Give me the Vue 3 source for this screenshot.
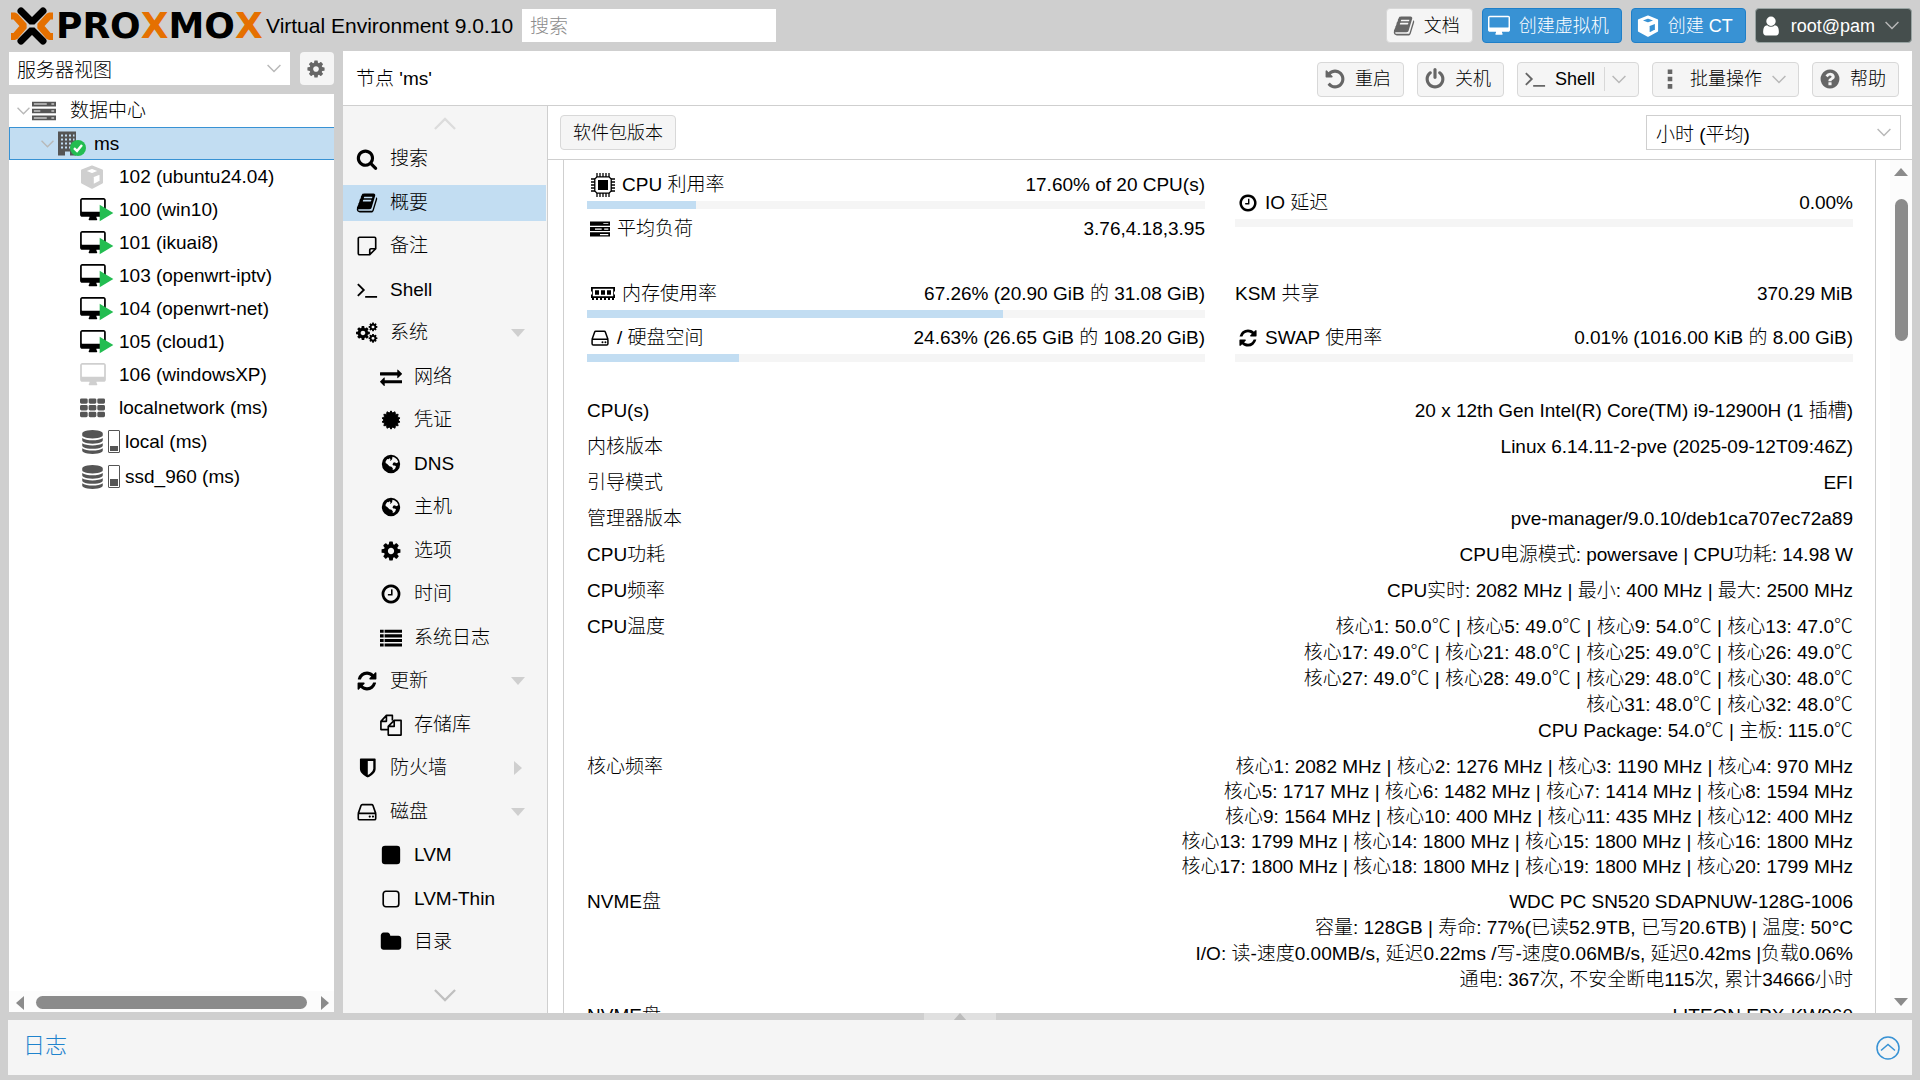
<script setup>
import { ref, h } from 'vue';

// --- ICONS ---
const cog = 'M1152 896q0-106-75-181t-181-75-181 75-75 181 75 181 181 75 181-75 75-181zm512-109v222q0 12-8 23t-20 13l-185 28q-19 54-39 91 35 50 107 138 10 12 10 25t-9 23q-27 37-99 108t-94 71q-12 0-26-9l-138-108q-44 23-91 38-16 136-29 186-7 28-36 28h-222q-14 0-24.5-8.5t-11.5-21.5l-28-184q-49-16-90-37l-141 107q-10 9-25 9-14 0-25-11-126-114-165-168-7-10-7-23 0-12 8-23 15-21 51-66.5t54-70.5q-27-50-41-99l-183-27q-13-2-21-12.5t-8-23.5v-222q0-12 8-23t19-13l186-28q14-46 39-92-40-57-107-138-10-12-10-24 0-10 9-23 26-36 98.5-107.5t94.5-71.5q13 0 26 10l138 107q44-23 91-38 16-136 29-186 7-28 36-28h222q14 0 24.5 8.5t11.5 21.5l28 184q49 16 90 37l142-107q9-9 24-9 13 0 25 10 129 119 165 170 7 8 7 22 0 12-8 23-15 21-51 66.5t-54 70.5q26 50 41 98l183 28q13 2 21 12.5t8 23.5z';
const desktop = 'M1728 992v-832q0-13-9.5-22.5t-22.5-9.5h-1600q-13 0-22.5 9.5t-9.5 22.5v832q0 13 9.5 22.5t22.5 9.5h1600q13 0 22.5-9.5t9.5-22.5zm128-832v1088q0 66-47 113t-113 47h-544q0 37 16 77.5t32 71 16 43.5q0 26-19 45t-45 19h-512q-26 0-45-19t-19-45q0-14 16-44t32-70 16-78h-544q-66 0-113-47t-47-113v-1088q0-66 47-113t113-47h1600q66 0 113 47t47 113z';

const starPoints = (teeth, outer, inner) => Array.from({ length: teeth * 2 }, (_, i) => {
  const r = i % 2 ? inner : outer;
  const a = (Math.PI * i) / teeth;
  return `${(12 + r * Math.sin(a)).toFixed(2)},${(12 - r * Math.cos(a)).toFixed(2)}`;
}).join(' ');

const path = (d) => `<path fill="currentColor" d="${d}"/>`;
const FA = '0 0 1792 1792';

// name: [viewBox, markup]
const icons = {
  search: [FA, path('M1216 832q0-185-131.5-316.5t-316.5-131.5-316.5 131.5-131.5 316.5 131.5 316.5 316.5 131.5 316.5-131.5 131.5-316.5zm512 832q0 52-38 90t-90 38q-54 0-90-38l-343-342q-179 124-399 124-143 0-273.5-55.5t-225-150-150-225-55.5-273.5 55.5-273.5 150-225 225-150 273.5-55.5 273.5 55.5 225 150 150 225 55.5 273.5q0 220-124 399l343 343q37 37 37 90z')],
  cog: [FA, path(cog)],
  cogs: ['0 0 24 24', `<g transform="translate(-1.2 3.2) scale(.0098)">${path(cog)}</g><g transform="translate(13 -.2) scale(.0062)">${path(cog)}</g><g transform="translate(13 12.2) scale(.0062)">${path(cog)}</g>`],
  book: [FA, path('M1703 478q40 57 18 129l-275 906q-19 64-76.5 107.5t-122.5 43.5h-923q-77 0-148.5-53.5t-99.5-131.5q-24-67-2-127 0-4 3-27t4-37q1-8-3-21.5t-3-19.5q2-11 8-21t16.5-23.5 16.5-23.5q23-38 45-91.5t30-91.5q3-10 .5-30t-.5-28q3-11 17-28t17-23q21-36 42-92t25-90q1-9-2.5-32t.5-28q4-13 22-30.5t22-22.5q19-26 42.5-84.5t27.5-96.5q1-8-3-25.5t-2-26.5q2-8 9-18t18-23 17-21q8-12 16.5-30.5t15-35 16-36 19.5-32 26.5-23.5 36-11.5 47.5 5.5l-1 3q38-9 51-9h761q74 0 114 56t18 130l-274 906q-36 119-71.5 153.5t-128.5 34.5h-869q-27 0-38 15-11 16-1 43 24 70 144 70h923q29 0 56-15.5t35-41.5l300-987q7-22 5-57 38 15 59 43zm-1064 2q-4 13 2 22.5t20 9.5h608q13 0 25.5-9.5t16.5-22.5l21-64q4-13-2-22.5t-20-9.5h-608q-13 0-25.5 9.5t-16.5 22.5zm-83 256q-4 13 2 22.5t20 9.5h608q13 0 25.5-9.5t16.5-22.5l21-64q4-13-2-22.5t-20-9.5h-608q-13 0-25.5 9.5t-16.5 22.5z')],
  note: ['0 0 24 24', '<path fill="none" stroke="currentColor" stroke-width="1.8" stroke-linejoin="round" d="M15 21.5H3.8a1.3 1.3 0 0 1-1.3-1.3V3.8a1.3 1.3 0 0 1 1.3-1.3h16.4a1.3 1.3 0 0 1 1.3 1.3V15L15 21.5v-5.2a1.3 1.3 0 0 1 1.3-1.3h5.2"/>'],
  terminal: ['0 0 24 24', '<path fill="none" stroke="currentColor" stroke-width="2" d="M2 5.5 8.5 12 2 18.5M10 19.5h13"/>'],
  exchange: [FA, path('M1792 1184v192q0 13-9.5 22.5t-22.5 9.5h-1376v192q0 13-9.5 22.5t-22.5 9.5q-12 0-24-10l-319-320q-9-9-9-22 0-14 9-23l320-320q9-9 23-9 13 0 22.5 9.5t9.5 22.5v192h1376q13 0 22.5 9.5t9.5 22.5zm0-544q0 14-9 23l-320 320q-9 9-23 9-13 0-22.5-9.5t-9.5-22.5v-192h-1376q-13 0-22.5-9.5t-9.5-22.5v-192q0-13 9.5-22.5t22.5-9.5h1376v-192q0-14 9-23t23-9q12 0 24 10l319 319q9 9 9 23z')],
  certificate: ['0 0 24 24', `<polygon fill="currentColor" stroke="currentColor" stroke-linejoin="round" points="${starPoints(14, 10, 7.8)}"/>`],
  globe: ['0 0 24 24', '<path fill="currentColor" fill-rule="evenodd" d="M12 2a10 10 0 1 0 0 20a10 10 0 1 0 0-20zM13.6 4.200l2.400.6 2.400 2 1.500 2.800-.8 1-1.700.6-1-1-2 .4-.8 2.200 1.600 1.200 1-.3 1.200.8-.7 2-1.300 1.600-1.600.4.200-2-1.500-1.500-2.200-.6-2.400-2.400-1.800-1.200.1-1.700 1.700-2.500 1.300.3 1.200-1.100 1.300 1-1 1 1 .6 1.500-1.500z"/>'],
  clock: [FA, path('M1024 544v448q0 14-9 23t-23 9h-320q-14 0-23-9t-9-23v-64q0-14 9-23t23-9h224v-352q0-14 9-23t23-9h64q14 0 23 9t9 23zm416 352q0-148-73-273t-198-198-273-73-273 73-198 198-73 273 73 273 198 198 273 73 273-73 198-198 73-273zm224 0q0 209-103 385.5t-279.5 279.5-385.5 103-385.5-103-279.5-279.5-103-385.5 103-385.5 279.5-279.5 385.5-103 385.5 103 279.5 279.5 103 385.5z')],
  list: ['0 0 24 24', path('M0 3h4v3.4H0zM5 3h19v3.4H5zM0 8h4v3.4H0zM5 8h19v3.4H5zM0 13h4v3.4H0zM5 13h19v3.4H5zM0 18h4v3.4H0zM5 18h19v3.4H5z')],
  refresh: [FA, path('M1639 1056q0 5-1 7-64 268-268 434.5t-478 166.5q-146 0-282.5-55t-243.5-157l-129 129q-19 19-45 19t-45-19-19-45v-448q0-26 19-45t45-19h448q26 0 45 19t19 45-19 45l-137 137q71 66 161 102t187 36q134 0 250-65t186-179q11-17 53-117 8-23 30-23h192q13 0 22.5 9.5t9.5 22.5zm25-800v448q0 26-19 45t-45 19h-448q-26 0-45-19t-19-45 19-45l138-138q-148-137-349-137-134 0-250 65t-186 179q-11 17-53 117-8 23-30 23h-199q-13 0-22.5-9.5t-9.5-22.5v-7q65-268 270-434.5t480-166.5q146 0 284 55.5t245 156.5l130-129q19-19 45-19t45 19 19 45z')],
  files: ['0 0 24 24', '<path fill="none" stroke="currentColor" stroke-width="1.8" stroke-linejoin="round" d="M9 17H1V8l6-6.5h6.5V7M7 1.5V8H1M9 23v-9.5L15.500 7H23v16zM15.500 7v6.500H9"/>'],
  shield: [FA, path('M1408 960v-640h-448v1137q119-63 213-137 235-184 235-360zm192-768v768q0 86-33.5 170.500t-83 150-118 127.500-126.500 103-121 77.500-89.500 49.500-42.500 20q-12 6-26 6t-26-6q-16-7-42.500-20t-89.500-49.500-121-77.500-126.500-103-118-127.500-83-150-33.500-170.500v-768q0-26 19-45t45-19h1152q26 0 45 19t19 45z')],
  hdd: ['0 0 24 24', '<path fill="none" stroke="currentColor" stroke-width="1.8" stroke-linejoin="round" d="M2.500 13.500v5.500a1.500 1.500 0 0 0 1.500 1.500h16a1.500 1.500 0 0 0 1.500-1.500v-5.500zM2.500 13.500 5.500 5a1.500 1.500 0 0 1 1.400-1h10.200a1.500 1.500 0 0 1 1.400 1l3 8.500"/><circle cx="15" cy="17" r="1.200" fill="currentColor"/><circle cx="18.500" cy="17" r="1.200" fill="currentColor"/>'],
  square: ['0 0 24 24', '<rect x="2" y="2" width="20" height="20" rx="3.500" fill="currentColor"/>'],
  squareO: ['0 0 24 24', '<rect x="3.500" y="3.500" width="17" height="17" rx="3" fill="none" stroke="currentColor" stroke-width="1.800"/>'],
  folder: [FA, path('M1728 608v704q0 92-66 158t-158 66h-1216q-92 0-158-66t-66-158v-960q0-92 66-158t158-66h320q92 0 158 66t66 158v32h672q92 0 158 66t66 158z')],
  undo: [FA, path('M1664 896q0 156-61 298t-164 245-245 164-298 61q-172 0-327-72.500t-264-204.500q-7-10-6.500-22.500t8.500-20.500l137-138q10-9 25-9 16 2 23 12 73 95 179 147t225 52q104 0 198.500-40.500t163.500-109.500 109.500-163.500 40.500-198.500-40.500-198.500-109.500-163.500-163.500-109.500-198.500-40.500q-98 0-188 35.500t-160 101.500l137 138q31 30 14 69-17 40-59 40h-448q-26 0-45-19t-19-45v-448q0-42 40-59 39-17 69 14l130 129q107-101 244.500-156.500t284.500-55.500q156 0 298 61t245 164 164 245 61 298z')],
  power: [FA, path('M1664 896q0 156-61 298t-164 245-245 164-298 61-298-61-245-164-164-245-61-298q0-182 80.500-343t226.500-270q43-32 95.500-25t83.500 50q32 42 24.500 94.500t-49.500 84.500q-98 74-151.500 181t-53.500 228q0 104 40.500 198.500t109.500 163.500 163.500 109.500 198.500 40.500 198.500-40.500 163.500-109.500 109.500-163.500 40.500-198.500q0-121-53.500-228t-151.500-181q-42-32-49.500-84.500t24.500-94.500q31-43 84-50t95 25q146 109 226.500 270t80.500 343zm-640-768v640q0 52-38 90t-90 38-90-38-38-90v-640q0-52 38-90t90-38 90 38 38 90z')],
  help: [FA, path('M1024 1376v-192q0-14-9-23t-23-9h-192q-14 0-23 9t-9 23v192q0 14 9 23t23 9h192q14 0 23-9t9-23zm256-672q0-88-55.500-163t-138.500-116-170-41q-243 0-371 213-15 24 8 42l132 100q7 6 19 6 16 0 25-12 53-68 86-92 34-24 86-24 48 0 85.500 26t37.500 59q0 38-20 61t-68 45q-63 28-115.500 86.500t-52.500 125.500v36q0 14 9 23t23 9h192q14 0 23-9t9-23q0-19 21.500-49.500t54.500-49.500q32-18 49-28.500t46-35 44.500-48 28-60.500 12.500-81zm384 192q0 209-103 385.500t-279.500 279.500-385.500 103-385.500-103-279.500-279.500-103-385.500 103-385.500 279.500-279.500 385.500-103 385.500 103 279.500 279.500 103 385.500z')],
  dots: ['0 0 24 24', path('M9.500 1.500h5v5h-5zM9.500 9.500h5v5h-5zM9.500 17.500h5v5h-5z')],
  user: [FA, path('M1536 1399q0 109-62.500 187t-150.500 78h-854q-88 0-150.500-78t-62.500-187q0-85 8.500-160.500t31.500-152 58.500-131 94-89 134.500-34.500q131 128 313 128t313-128q76 0 134.500 34.500t94 89 58.500 131 31.500 152 8.500 160.500zm-256-887q0 159-112.500 271.500t-271.500 112.500-271.500-112.500-112.500-271.500 112.500-271.500 271.500-112.500 271.500 112.500 112.500 271.500z')],
  cube: ['0 0 24 24', '<path fill="currentColor" stroke="currentColor" stroke-width="2" stroke-linejoin="round" fill-rule="evenodd" d="M12 1.500 22 5.500v12L12 22.800 2 17.500v-12zM12.800 11.400v9L20.500 16.500V8.300zM12 2.900 4 6 12 9.200 20 6z" />'],
  desktop: ['-64 0 1920 1792', path(desktop)],
  vmRunning: ['-64 0 2528 1792', `${path(desktop)}<path fill="#23bd51" d="M1400 500v1230l1020-610z"/>`],
  server: ['0 0 26 22', '<path fill="currentColor" fill-rule="evenodd" d="M0 1h26v5H0zM2 3v1h14V3zM21 3v1h3V3zM0 8.500h26v5H0zM2 10.500v1h7v-1zM21 10.500v1h3v-1zM0 16h26v5H0zM2 18v1h14v-1zM21 18v1h3v-1z"/>'],
  load: ['0 0 24 20', '<path fill="currentColor" fill-rule="evenodd" d="M0 1h24v5H0zM16 3v1h6V3zM0 7.500h24v5H0zM6 9.500v1.500h8V9.500zM17 9.500v1.500h5V9.500zM0 14h24v5H0zM12 16v1.500h10V16z"/>'],
  building: ['0 0 24 24', '<path fill="currentColor" fill-rule="evenodd" d="M2 0h18v24h-6v-4h-5v4H2zM5 3v2h2V3zM9 3v2h2V3zM13 3v2h2V3zM17 3v2h1.500V3zM5 7v2h2V7zM9 7v2h2V7zM13 7v2h2V7zM17 7v2h1.500V7zM5 11v2h2v-2zM9 11v2h2v-2zM13 11v2h2v-2zM5 15v2h2v-2zM9 15v2h2v-2zM13 15v2h2v-2z"/>'],
  check: ['0 0 16 16', '<circle cx="8" cy="8" r="8" fill="#23bd51"/><path fill="none" stroke="#fff" stroke-width="2.400" d="M4 8.200 7 11l5-6"/>'],
  th: ['0 0 26 20', path('M1.500 0h5q1.500 0 1.500 1.500v2.500q0 1.500-1.500 1.500h-5q-1.500 0-1.500-1.500v-2.500q0-1.500 1.500-1.500zm9 0h5q1.500 0 1.500 1.500v2.500q0 1.500-1.500 1.500h-5q-1.500 0-1.500-1.500v-2.500q0-1.500 1.500-1.500zm9 0h5q1.500 0 1.500 1.500v2.500q0 1.500-1.500 1.500h-5q-1.500 0-1.500-1.500v-2.500q0-1.500 1.500-1.500zm-18 7h5q1.500 0 1.500 1.500v2.500q0 1.500-1.500 1.500h-5q-1.500 0-1.500-1.500v-2.500q0-1.500 1.500-1.500zm9 0h5q1.500 0 1.500 1.500v2.500q0 1.500-1.500 1.500h-5q-1.500 0-1.500-1.500v-2.500q0-1.500 1.500-1.500zm9 0h5q1.500 0 1.500 1.500v2.500q0 1.500-1.500 1.500h-5q-1.500 0-1.500-1.500v-2.500q0-1.500 1.500-1.500zm-18 7h5q1.500 0 1.500 1.500v2.500q0 1.500-1.500 1.500h-5q-1.500 0-1.500-1.500v-2.500q0-1.500 1.500-1.500zm9 0h5q1.500 0 1.500 1.500v2.500q0 1.500-1.500 1.500h-5q-1.500 0-1.500-1.500v-2.500q0-1.500 1.500-1.500zm9 0h5q1.500 0 1.500 1.500v2.500q0 1.500-1.500 1.500h-5q-1.500 0-1.500-1.500v-2.500q0-1.500 1.500-1.500z')],
  database: ['128 0 1536 1792', path('M896 768q237 0 443-43t325-127v170q0 69-103 128t-280 93.500-385 34.500-385-34.500-280-93.500-103-128v-170q119 84 325 127t443 43zm0 768q237 0 443-43t325-127v170q0 69-103 128t-280 93.500-385 34.500-385-34.500-280-93.500-103-128v-170q119 84 325 127t443 43zm0-384q237 0 443-43t325-127v170q0 69-103 128t-280 93.500-385 34.500-385-34.500-280-93.500-103-128v-170q119 84 325 127t443 43zm0-1152q208 0 385 34.500t280 93.500 103 128v128q0 69-103 128t-280 93.500-385 34.500-385-34.500-280-93.500-103-128v-128q0-69 103-128t280-93.500 385-34.500z')],
  cpu: ['0 0 24 24', '<path fill="none" stroke="currentColor" stroke-width="1.300" d="M6 3.800h12l2.200 2.200v12l-2.200 2.200H6L3.800 18V6z"/><path fill="currentColor" d="M7 7h10v10H7z"/><path stroke="currentColor" stroke-width="1.300" d="M6 0v4M9 0v4M12 0v4M15 0v4M18 0v4M6 20v4M9 20v4M12 20v4M15 20v4M18 20v4M0 6h4M0 9h4M0 12h4M0 15h4M0 18h4M20 6h4M20 9h4M20 12h4M20 15h4M20 18h4"/>'],
  memory: ['0 0 24 14', '<path fill="currentColor" fill-rule="evenodd" d="M0 0h24v4l-1 1v2l1 1v3H0V8l1-1V5L0 4zM1.800 1.800v7.400h20.400V1.800z"/><path fill="currentColor" d="M4 3.200h4v4.600H4zM10 3.200h4v4.600h-4zM16 3.200h4v4.600h-4zM1 11h2v2H1zM5 11h2v2H5zM9 11h2v2H9zM13 11h2v2h-2zM17 11h2v2h-2zM21 11h2v2h-2z"/>'],
  chevron: ['0 0 24 14', '<path fill="none" stroke="currentColor" stroke-width="2.500" d="m1 1 11 11L23 1"/>'],
  chevronUp: ['0 0 24 14', '<path fill="none" stroke="currentColor" stroke-width="2.500" d="m1 13 11-11 11 11"/>'],
  circleUp: ['0 0 24 24', '<circle cx="12" cy="12" r="11" fill="none" stroke="currentColor" stroke-width="1.500"/><path fill="none" stroke="currentColor" stroke-width="1.500" d="m5 14.500 7-6 7 6"/>'],
};

const Icon = (props) => h('svg', { class: 'icon', viewBox: icons[props.name][0], 'aria-hidden': 'true', innerHTML: icons[props.name][1] });
Icon.props = ['name'];

// --- STATE ---
const view = ref('服务器视图');
const range = ref('小时 (平均)');
const keyword = ref('');

const tree = [
  { level: 0, icon: 'server', text: '数据中心', open: true },
  { level: 1, icon: 'building', text: 'ms', open: true, selected: true },
  { level: 2, icon: 'cube', text: '102 (ubuntu24.04)', stopped: true },
  { level: 2, icon: 'vmRunning', text: '100 (win10)' },
  { level: 2, icon: 'vmRunning', text: '101 (ikuai8)' },
  { level: 2, icon: 'vmRunning', text: '103 (openwrt-iptv)' },
  { level: 2, icon: 'vmRunning', text: '104 (openwrt-net)' },
  { level: 2, icon: 'vmRunning', text: '105 (cloud1)' },
  { level: 2, icon: 'desktop', text: '106 (windowsXP)', stopped: true },
  { level: 2, icon: 'th', text: 'localnetwork (ms)' },
  { level: 2, icon: 'database', text: 'local (ms)', usage: 25 },
  { level: 2, icon: 'database', text: 'ssd_960 (ms)', usage: 35 },
];

const nav = [
  { icon: 'search', text: '搜索' },
  { icon: 'book', text: '概要', active: true },
  { icon: 'note', text: '备注' },
  { icon: 'terminal', text: 'Shell' },
  { icon: 'cogs', text: '系统', arrow: 'down' },
  { icon: 'exchange', text: '网络', sub: true },
  { icon: 'certificate', text: '凭证', sub: true },
  { icon: 'globe', text: 'DNS', sub: true },
  { icon: 'globe', text: '主机', sub: true },
  { icon: 'cog', text: '选项', sub: true },
  { icon: 'clock', text: '时间', sub: true },
  { icon: 'list', text: '系统日志', sub: true },
  { icon: 'refresh', text: '更新', arrow: 'down' },
  { icon: 'files', text: '存储库', sub: true },
  { icon: 'shield', text: '防火墙', arrow: 'right' },
  { icon: 'hdd', text: '磁盘', arrow: 'down' },
  { icon: 'square', text: 'LVM', sub: true },
  { icon: 'squareO', text: 'LVM-Thin', sub: true },
  { icon: 'folder', text: '目录', sub: true },
];

const gauges = [
  [
    { icon: 'cpu', label: 'CPU 利用率', value: '17.60% of 20 CPU(s)', percent: 17.6 },
    { icon: 'load', label: '平均负荷', value: '3.76,4.18,3.95' },
  ],
  [{ icon: 'clock', label: 'IO 延迟', value: '0.00%', percent: 0 }],
  [
    { icon: 'memory', label: '内存使用率', value: '67.26% (20.90 GiB 的 31.08 GiB)', percent: 67.26 },
    { icon: 'hdd', label: '/ 硬盘空间', value: '24.63% (26.65 GiB 的 108.20 GiB)', percent: 24.63 },
  ],
  [
    { label: 'KSM 共享', value: '370.29 MiB' },
    { icon: 'refresh', label: 'SWAP 使用率', value: '0.01% (1016.00 KiB 的 8.00 GiB)', percent: 0 },
  ],
];

const info = [
  { label: 'CPU(s)', lines: ['20 x 12th Gen Intel(R) Core(TM) i9-12900H (1 插槽)'] },
  { label: '内核版本', lines: ['Linux 6.14.11-2-pve (2025-09-12T09:46Z)'] },
  { label: '引导模式', lines: ['EFI'] },
  { label: '管理器版本', lines: ['pve-manager/9.0.10/deb1ca707ec72a89'] },
  { label: 'CPU功耗', lines: ['CPU电源模式: powersave | CPU功耗: 14.98 W'] },
  { label: 'CPU频率', lines: ['CPU实时: 2082 MHz | 最小: 400 MHz | 最大: 2500 MHz'] },
  {
    label: 'CPU温度',
    lines: [
      '核心1: 50.0℃ | 核心5: 49.0℃ | 核心9: 54.0℃ | 核心13: 47.0℃',
      '核心17: 49.0℃ | 核心21: 48.0℃ | 核心25: 49.0℃ | 核心26: 49.0℃',
      '核心27: 49.0℃ | 核心28: 49.0℃ | 核心29: 48.0℃ | 核心30: 48.0℃',
      '核心31: 48.0℃ | 核心32: 48.0℃',
      'CPU Package: 54.0℃ | 主板: 115.0℃',
    ],
  },
  {
    label: '核心频率',
    dense: true,
    lines: [
      '核心1: 2082 MHz | 核心2: 1276 MHz | 核心3: 1190 MHz | 核心4: 970 MHz',
      '核心5: 1717 MHz | 核心6: 1482 MHz | 核心7: 1414 MHz | 核心8: 1594 MHz',
      '核心9: 1564 MHz | 核心10: 400 MHz | 核心11: 435 MHz | 核心12: 400 MHz',
      '核心13: 1799 MHz | 核心14: 1800 MHz | 核心15: 1800 MHz | 核心16: 1800 MHz',
      '核心17: 1800 MHz | 核心18: 1800 MHz | 核心19: 1800 MHz | 核心20: 1799 MHz',
    ],
  },
  {
    label: 'NVME盘',
    lines: [
      'WDC PC SN520 SDAPNUW-128G-1006',
      '容量: 128GB | 寿命: 77%(已读52.9TB, 已写20.6TB) | 温度: 50°C',
      'I/O: 读-速度0.00MB/s, 延迟0.22ms /写-速度0.06MB/s, 延迟0.42ms |负载0.06%',
      '通电: 367次, 不安全断电115次, 累计34666小时',
    ],
  },
  { label: 'NVME盘', lines: ['LITEON EPX-KW960'] },
];
</script>

<template>
  <div class="app">
    <header class="top">
      <a href="#" class="logo" aria-label="Proxmox">
        <svg class="logo-mark" viewBox="0 0 44 38" fill="none" stroke-width="7" stroke-linejoin="bevel">
          <path stroke="#e57000" d="M1 9h4l9 10-9 10.500H1M43 9h-4l-9 10 9 10.500h4" />
          <path stroke="#000" stroke-linecap="round" d="m11 4 11 11L33 4M11 34l11-11 11 11" />
        </svg>
        <span class="logo-text">PRO<b>X</b>MO<b>X</b></span>
      </a>
      <span class="version">Virtual Environment 9.0.10</span>
      <input v-model="keyword" class="search" type="text" placeholder="搜索" aria-label="搜索">
      <div class="top-actions">
        <button class="btn flat"><Icon name="book" />文档</button>
        <button class="btn primary"><Icon name="desktop" />创建虚拟机</button>
        <button class="btn primary"><Icon name="cube" />创建 CT</button>
        <button class="btn dark"><Icon name="user" />root@pam<Icon name="chevron" class="caret" /></button>
      </div>
    </header>

    <div class="body">
      <aside class="side">
        <div class="side-bar">
          <div class="select-box">
            <select v-model="view" aria-label="视图"><option>服务器视图</option></select>
            <Icon name="chevron" class="caret" />
          </div>
          <button class="gear" aria-label="设置"><Icon name="cog" /></button>
        </div>
        <div class="tree-panel">
          <ul class="tree">
            <li v-for="node in tree" :key="node.text">
              <a href="#" :class="['node', `level-${node.level}`, { selected: node.selected, stopped: node.stopped, storage: node.usage }]">
                <Icon v-if="node.open" name="chevron" class="expander" />
                <span class="node-icon">
                  <Icon :name="node.icon" :class="`i-${node.icon}`" />
                  <Icon v-if="node.selected" name="check" class="badge" />
                  <span v-if="node.usage" class="usage"><span :style="{ height: node.usage + '%' }"></span></span>
                </span>
                {{ node.text }}
              </a>
            </li>
          </ul>
          <div class="hscroll"><i class="tri left"></i><span class="thumb"></span><i class="tri right"></i></div>
        </div>
      </aside>

      <main class="main">
        <div class="title-bar">
          <h1>节点 'ms'</h1>
          <div class="actions">
            <button class="btn"><Icon name="undo" />重启</button>
            <button class="btn"><Icon name="power" />关机</button>
            <button class="btn split"><Icon name="terminal" />Shell<span class="divider"></span><Icon name="chevron" class="caret" /></button>
            <button class="btn"><Icon name="dots" />批量操作<Icon name="chevron" class="caret" /></button>
            <button class="btn"><Icon name="help" />帮助</button>
          </div>
        </div>

        <div class="content">
          <nav class="nav">
            <button class="nav-scroll" aria-label="向上"><Icon name="chevronUp" /></button>
            <ul>
              <li v-for="item in nav" :key="item.text">
                <a href="#" :class="['nav-item', { active: item.active, sub: item.sub }]">
                  <span class="nav-icon"><Icon :name="item.icon" /></span>{{ item.text }}
                  <i v-if="item.arrow" :class="['tri', 'pale', item.arrow]"></i>
                </a>
              </li>
            </ul>
            <button class="nav-scroll bottom" aria-label="向下"><Icon name="chevron" /></button>
          </nav>

          <section class="summary">
            <div class="summary-bar">
              <button class="btn plain">软件包版本</button>
              <div class="select-box bordered">
                <select v-model="range" aria-label="时间范围"><option>小时 (平均)</option></select>
                <Icon name="chevron" class="caret" />
              </div>
            </div>
            <div class="scroll-area">
              <div class="panel">
                <div class="gauges">
                  <div v-for="(group, g) in gauges" :key="g" :class="['group', { single: group.length === 1 }]">
                    <div v-for="item in group" :key="item.label" class="gauge">
                      <div class="gauge-text">
                        <span class="gauge-label"><Icon v-if="item.icon" :name="item.icon" :class="`g-${item.icon}`" />{{ item.label }}</span>
                        <span>{{ item.value }}</span>
                      </div>
                      <div v-if="item.percent !== undefined" class="bar"><div :style="{ width: item.percent + '%' }"></div></div>
                    </div>
                  </div>
                </div>
                <table class="info">
                  <tbody>
                    <tr v-for="(row, i) in info" :key="i" :class="{ dense: row.dense }">
                      <th scope="row">{{ row.label }}</th>
                      <td><div v-for="line in row.lines" :key="line">{{ line }}</div></td>
                    </tr>
                  </tbody>
                </table>
              </div>
              <div class="vscroll"><i class="tri up"></i><span class="thumb"></span><i class="tri down"></i></div>
            </div>
          </section>
        </div>
      </main>
    </div>

    <div class="splitter"><span class="handle"><i class="tri up"></i></span></div>
    <footer class="log">
      <h2>日志</h2>
      <button aria-label="展开"><Icon name="circleUp" /></button>
    </footer>
  </div>
</template>

<style>
body { margin: 0; }
</style>

<style scoped>
.app { display: flex; flex-direction: column; height: 100vh; overflow: hidden; background: #cfcfcf; color: #000; font: 300 19px/26px "Liberation Sans", "Noto Sans CJK SC", sans-serif; }
.app * { box-sizing: border-box; }
button, select, input { font: inherit; color: inherit; margin: 0; }
ul { list-style: none; margin: 0; padding: 0; }
a { color: inherit; text-decoration: none; }
h1, h2 { margin: 0; font-weight: 300; }
.icon { flex: none; width: 22px; height: 22px; display: block; }
.caret { width: 14px; height: 9px; color: #b8b8b8; }

/* Header */
.top { display: flex; align-items: center; height: 51px; flex: none; padding: 0 8px 0 10px; }
.logo { display: flex; align-items: center; }
.logo-mark { width: 44px; height: 38px; }
.logo-text { margin-left: 2px; width: 207px; white-space: nowrap; font: 700 36px/38px "DejaVu Sans", sans-serif; }
.logo-text b { color: #e57000; }
.version { margin-left: 3px; font-size: 21px; white-space: nowrap; }
.search { margin-left: 9px; width: 254px; height: 33px; border: 0; padding: 2px 8px 0; background: #fff; }
.search::placeholder { color: #8c8c8c; opacity: 1; }
.top-actions { display: flex; gap: 9px; margin-left: auto; }

.btn { display: flex; align-items: center; height: 35px; padding: 0 12px 0 6px; border: 1px solid #d8d8d8; border-radius: 4px; background: #f5f5f5; font-size: 18px; white-space: nowrap; }
.btn .icon:first-child { margin-right: 9px; color: #666; }
.btn .caret { margin-left: 10px; }
.btn.primary { background: #3892d4; border-color: #1f7fc8; color: #fff; padding-left: 5px; }
.btn.primary .icon:first-child, .btn.dark .icon:first-child { color: #fff; }
.btn.dark { background: #454e4d; border-color: #98a3a2; color: #fff; padding-left: 4px; }
.btn.plain { padding: 0 12px; }

/* Resource tree */
.body { display: flex; flex: 1; min-height: 0; gap: 9px; padding: 0 8px 0 9px; }
.side { width: 325px; flex: none; display: flex; flex-direction: column; padding: 1px 0; }
.side-bar { display: flex; gap: 10px; height: 33px; margin-bottom: 9px; }
.select-box { position: relative; flex: 1; background: #fff; }
.select-box select { width: 100%; height: 100%; appearance: none; border: 0; background: none; padding: 4px 8px 0; }
.select-box .caret { position: absolute; right: 9px; top: 12px; pointer-events: none; }
.gear { width: 34px; border: 0; border-radius: 4px; background: #f5f5f5; color: #666; padding: 0 6px; }
.gear .icon { width: 20px; height: 20px; }
.tree-panel { flex: 1; min-height: 0; display: flex; flex-direction: column; background: #fff; }
.tree { flex: 1; overflow: hidden; }
.node { display: flex; align-items: center; height: 33px; border: 1px solid transparent; border-right: 0; white-space: nowrap; }
.node.level-0 { padding-left: 7px; }
.node.level-1 { padding-left: 31px; }
.node.level-2 { padding-left: 70px; }
.node.selected { background: #c2ddf2; border-color: #3892d4; }
.node.storage { height: 35px; }
.expander { width: 13px; height: 8px; color: #b8b8b8; margin-right: 2px; }
.node-icon { position: relative; display: flex; align-items: center; gap: 5px; width: 38px; height: 100%; color: #555; }
.node.level-2 .node-icon { width: 39px; }
.node.storage .node-icon { width: 45px; padding-left: 2px; }
.node.stopped .node-icon { color: #cfcfcf; }
.icon.i-server { width: 24px; }
.icon.i-building { width: 24px; height: 25px; }
.icon.i-cube { height: 24px; width: 24px; }
.icon.i-desktop { width: 26px; height: 24px; }
.icon.i-vmRunning { width: 34px; height: 24px; color: #000; }
.icon.i-th { width: 25px; height: 20px; }
.icon.i-database { width: 21px; height: 24px; }
.badge { position: absolute; left: 14px; bottom: 3px; width: 16px; height: 16px; }
.usage { display: flex; align-items: flex-end; width: 12px; height: 23px; border: 1px solid #555; border-radius: 1px; padding: 1px; }
.usage span { width: 100%; background: #555; }

/* Scroll bars */
.tri { display: block; flex: none; width: 0; height: 0; border: 7px solid transparent; color: #8b8b8b; }
.tri.pale { color: #cfcfcf; margin-left: auto; margin-right: 21px; }
.tri.pale.right { margin-right: 24px; }
.tri.up { border-top: 0; border-bottom: 8px solid; }
.tri.down { border-bottom: 0; border-top: 8px solid; }
.tri.left { border-left: 0; border-right: 8px solid; }
.tri.right { border-right: 0; border-left: 8px solid; }
.thumb { background: #8b8b8b; border-radius: 7px; }
.hscroll { display: flex; align-items: center; gap: 12px; height: 21px; padding: 2px 5px 0 7px; background: #fcfcfc; }
.hscroll .thumb { width: 271px; height: 13px; margin-right: auto; }
.vscroll { display: flex; flex-direction: column; align-items: center; width: 22px; padding: 8px 0 7px; background: #fcfcfc; }
.vscroll .thumb { width: 13px; height: 142px; margin: 23px 0 auto; }

/* Node panel */
.main { flex: 1; min-width: 0; display: flex; flex-direction: column; background: #fff; }
.title-bar { display: flex; align-items: center; justify-content: space-between; height: 55px; flex: none; padding: 2px 13px 0; border-bottom: 1px solid #cfcfcf; }
h1 { font-size: 19px; }
.actions { display: flex; gap: 13px; }
.btn.split .divider { width: 1px; height: 24px; margin-left: 9px; background: #d8d8d8; }
.btn.split .caret { margin-left: 7px; }
.content { display: flex; flex: 1; min-height: 0; }
.nav { display: flex; flex-direction: column; width: 205px; flex: none; background: #f5f5f5; border-right: 1px solid #cfcfcf; }
.nav ul { flex: 1; display: flex; flex-direction: column; justify-content: space-between; min-height: 0; }
.nav-scroll { display: flex; justify-content: center; align-items: center; height: 35px; flex: none; border: 0; background: none; color: #dcdcdc; }
.nav-scroll .icon { width: 22px; height: 13px; }
.nav-scroll.bottom { height: 53px; color: #c0c0c0; padding-top: 18px; }
.nav-item { display: flex; align-items: center; height: 36px; padding-left: 13px; margin-right: 1px; }
.nav-item.sub { padding-left: 37px; }
.nav-item.active { background: #c2ddf2; }
.nav-icon { display: flex; width: 22px; margin-right: 12px; }

/* Summary */
.summary { flex: 1; min-width: 0; display: flex; flex-direction: column; }
.summary-bar { display: flex; justify-content: space-between; align-items: center; height: 54px; flex: none; padding: 0 11px 0 12px; border-bottom: 1px solid #cfcfcf; }
.select-box.bordered { flex: none; width: 255px; height: 35px; border: 1px solid #cfcfcf; }
.select-box.bordered select { padding-left: 9px; }
.scroll-area { display: flex; flex: 1; min-height: 0; overflow: hidden; }
.panel { flex: 1; min-width: 0; margin: 0 14px 0 15px; padding: 12px 22px 0 23px; border: solid #cfcfcf; border-width: 0 1px; overflow: hidden; }
.gauges { display: grid; grid-template-columns: 1fr 1fr; gap: 28px 30px; margin-bottom: 31px; }
.group { display: flex; flex-direction: column; gap: 7px; min-height: 81px; }
.group.single { padding-top: 18px; }
.gauge { height: 37px; }
.gauge-text { display: flex; justify-content: space-between; white-space: nowrap; margin-bottom: 3px; }
.gauge-label { display: flex; align-items: center; }
.gauge-label .icon { width: 20px; height: 20px; margin: 0 7px 0 3px; }
.gauge-label .icon.g-cpu { width: 24px; height: 24px; margin-left: 4px; }
.gauge-label .icon.g-memory { width: 24px; height: 14px; margin-left: 4px; }
.bar { height: 8px; background: #f5f5f5; }
.bar div { height: 100%; background: #c2ddf2; }
.info { width: 100%; border-collapse: collapse; }
.info th, .info td { padding: 5px 0; vertical-align: top; font-weight: 300; white-space: nowrap; }
.info th { text-align: left; }
.info td { text-align: right; }
.info .dense { line-height: 25px; }

/* Log */
.splitter { display: flex; justify-content: center; height: 7px; flex: none; }
.handle { display: flex; justify-content: center; width: 72px; background: #e0e0e0; }
.handle .tri { color: #bbb; }
.log { display: flex; align-items: center; justify-content: space-between; height: 55px; flex: none; margin: 0 8px 5px; padding: 0 12px 0 15px; background: #f5f5f5; }
.log h2 { padding-bottom: 4px; font-size: 22px; color: #1f83cd; }
.log button { border: 0; padding: 0; background: none; color: #3892d4; }
.log .icon { width: 24px; height: 24px; }
</style>
